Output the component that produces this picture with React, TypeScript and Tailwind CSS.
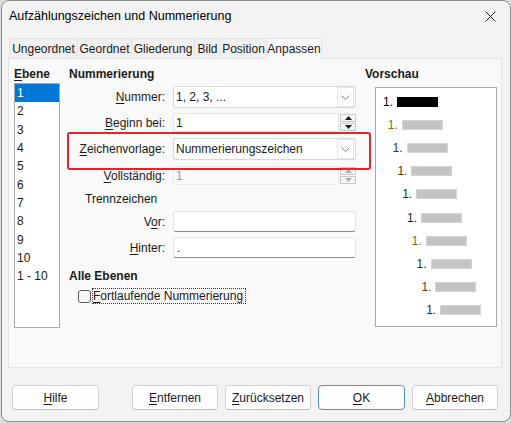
import React from 'react';

const tabs = [
  { label: 'Ungeordnet', w: 'w-[68px]' },
  { label: 'Geordnet', w: 'w-[54px]' },
  { label: 'Gliederung', w: 'w-[63px]' },
  { label: 'Bild', w: 'w-[26px]' },
  { label: 'Position', w: 'w-[46px]' },
];

const levels = ['1', '2', '3', '4', '5', '6', '7', '8', '9', '10', '1 - 10'];

const preview = [
  { pad: 'pl-[7px]', num: 'text-black', bar: 'bg-black border-black' },
  { pad: 'pl-[11.8px]', num: 'text-[#9a6510]', bar: 'bg-[#c3c3c3] border-[#d4d4d4]' },
  { pad: 'pl-[16.6px]', num: 'text-[#28345a]', bar: 'bg-[#c3c3c3] border-[#d4d4d4]' },
  { pad: 'pl-[21.4px]', num: 'text-[#5e3a18]', bar: 'bg-[#c3c3c3] border-[#d4d4d4]' },
  { pad: 'pl-[26.2px]', num: 'text-[#202840]', bar: 'bg-[#c3c3c3] border-[#d4d4d4]' },
  { pad: 'pl-[31px]', num: 'text-[#1a1a1a]', bar: 'bg-[#c3c3c3] border-[#d4d4d4]' },
  { pad: 'pl-[35.8px]', num: 'text-[#9a6510]', bar: 'bg-[#c3c3c3] border-[#d4d4d4]' },
  { pad: 'pl-[40.6px]', num: 'text-[#28345a]', bar: 'bg-[#c3c3c3] border-[#d4d4d4]' },
  { pad: 'pl-[45.4px]', num: 'text-[#5e3a18]', bar: 'bg-[#c3c3c3] border-[#d4d4d4]' },
  { pad: 'pl-[50.2px]', num: 'text-[#202840]', bar: 'bg-[#c3c3c3] border-[#d4d4d4]' },
];

function Chevron() {
  return (
    <svg width="9" height="5" viewBox="0 0 9 5" className="block">
      <polyline points="0.5,0.5 4.5,4.5 8.5,0.5" fill="none" stroke="#8a8a8a" strokeWidth="1" />
    </svg>
  );
}

function Combo({ value }: { value: string }) {
  return (
    <div className="ml-[8px] w-[183px] h-full bg-white border border-[#d8d8d8] rounded-[2px] flex items-center">
      <span className="flex-1 pl-[2px] leading-none">{value}</span>
      <div className="w-[17px] h-[20px] mr-px bg-[#fdfdfd] border border-[#e6e6e6] flex items-center justify-center">
        <Chevron />
      </div>
    </div>
  );
}

function Spin({ value, disabled }: { value: string; disabled?: boolean }) {
  const tri = disabled ? '#a8a8a8' : '#1a1a1a';
  return (
    <div className="ml-[8px] w-[183px] h-full flex">
      <div
        className={
          disabled
            ? 'w-[166px] h-full bg-[#f9f9f9] border border-[#ebebeb] flex items-center pl-[2px] text-[#9a9a9a]'
            : 'w-[166px] h-full bg-white border border-[#e6e6e6] flex items-center pl-[2px]'
        }
      >
        {value}
      </div>
      <div className="w-[17px] h-full flex flex-col justify-center gap-px pl-px">
        <div className="h-[8px] border border-[#c8c8c8] bg-[#f6f6f6] flex items-center justify-center">
          <svg width="7" height="4" viewBox="0 0 7 4">
            <polygon points="0,4 3.5,0 7,4" fill={tri} />
          </svg>
        </div>
        <div className="h-[8px] border border-[#c8c8c8] bg-[#f6f6f6] flex items-center justify-center">
          <svg width="7" height="4" viewBox="0 0 7 4">
            <polygon points="0,0 7,0 3.5,4" fill={tri} />
          </svg>
        </div>
      </div>
    </div>
  );
}

function TextField({ value }: { value: string }) {
  return (
    <div className="ml-[8px] w-[183px] h-full bg-white border border-[#e3e3e3] border-b-[#8a8a8a] rounded-[3px] flex items-center pl-[3px]">
      {value}
    </div>
  );
}

function Label({ first, rest }: { first: string; rest: string }) {
  return (
    <span className="w-[96px] text-right shrink-0">
      <span className="underline underline-offset-2">{first}</span>
      {rest}
    </span>
  );
}

function DialogButton({ first, rest, w, extra }: { first: string; rest: string; w: string; extra?: string }) {
  return (
    <div
      className={`${w} h-[25px] rounded-[4px] bg-[#fdfdfd] border flex items-center justify-center ${
        extra ?? 'border-[#d3d3d3] border-b-[#bdbdbd]'
      }`}
    >
      <span className="underline underline-offset-2">{first}</span>
      {rest}
    </div>
  );
}

export default function App() {
  return (
    <div className="w-[511px] h-[423px] bg-[#dcdcdc] font-['Liberation_Sans',Arial,sans-serif] text-[12px] text-[#1a1a1a]">
      <div className="ml-px w-[510px] h-[422px] rounded-[8px] border border-[#8e8e8e] bg-[#f3f3f3] flex flex-col overflow-hidden">
        {/* title bar */}
        <div className="h-[30px] flex items-center justify-between pl-[7px] pr-[14px] shrink-0">
          <span className="text-[12.5px] text-black">Aufzählungszeichen und Nummerierung</span>
          <svg width="11" height="11" viewBox="0 0 11 11">
            <path d="M0.5 0.5 L10.5 10.5 M10.5 0.5 L0.5 10.5" stroke="#1a1a1a" strokeWidth="1" />
          </svg>
        </div>

        {/* tabs */}
        <div className="mt-[6px] pl-[7px] flex items-end h-[21px] shrink-0">
          {tabs.map((t) => (
            <div
              key={t.label}
              className={`${t.w} h-[20px] border-t border-l border-[#e4e4e4] bg-[#f0f0f0] flex items-center justify-center leading-none`}
            >
              {t.label}
            </div>
          ))}
          <div className="w-[56px] h-[21px] -mb-px border-t border-r border-l border-[#e4e4e4] bg-[#f9f9f9] flex items-center justify-center leading-none relative z-10">
            Anpassen
          </div>
        </div>

        {/* tab page */}
        <div className="ml-[6px] w-[494px] h-[310px] border border-[#e4e4e4] bg-[#f9f9f9] flex relative shrink-0">
          {/* level list */}
          <div className="ml-[5px] w-[46px] flex flex-col">
            <div className="mt-[7px] h-[16px] leading-[16px] font-bold">
              <span className="underline underline-offset-2">E</span>bene
            </div>
            <div className="mt-[1px] h-[245px] border border-[#a9a9a9] bg-white flex flex-col">
              {levels.map((l, i) => (
                <div
                  key={l}
                  className={
                    i === 0
                      ? 'h-[18.3px] bg-[#0078d7] text-white pl-[2px] flex items-center'
                      : 'h-[18.3px] pl-[2px] flex items-center'
                  }
                >
                  {l}
                </div>
              ))}
            </div>
          </div>

          {/* numbering */}
          <div className="ml-[9px] w-[296px] flex flex-col">
            <div className="mt-[7px] h-[16px] leading-[16px] font-bold">Nummerierung</div>
            <div className="mt-[4px] h-[22px] flex items-center">
              <Label first="N" rest="ummer:" />
              <Combo value="1, 2, 3, ..." />
            </div>
            <div className="mt-[5px] h-[19px] flex items-center">
              <Label first="B" rest="eginn bei:" />
              <Spin value="1" />
            </div>
            <div className="mt-[6px] h-[22px] flex items-center">
              <Label first="Z" rest="eichenvorlage:" />
              <Combo value="Nummerierungszeichen" />
            </div>
            <div className="mt-[6px] h-[19px] flex items-center">
              <Label first="V" rest="ollständig:" />
              <Spin value="1" disabled />
            </div>
            <div className="mt-[7px] h-[14px] flex items-center pl-[16px]">Trennzeichen</div>
            <div className="mt-[5px] h-[21px] flex items-center">
              <span className="w-[96px] text-right shrink-0">
                V<span className="underline underline-offset-2">o</span>r:
              </span>
              <TextField value="" />
            </div>
            <div className="mt-[5px] h-[21px] flex items-center">
              <Label first="H" rest="inter:" />
              <TextField value="." />
            </div>
            <div className="mt-[11px] h-[14px] leading-[14px] font-bold">Alle Ebenen</div>
            <div className="mt-[5px] h-[16px] flex items-center pl-[9px]">
              <div className="w-[13px] h-[13px] rounded-[3px] border border-[#5c5c5c] bg-[#f6f6f6] shrink-0" />
              <div className="ml-px h-[16px] border border-dotted border-[#3a3a3a] flex items-center pr-[2px]">
                <span className="underline underline-offset-2">F</span>ortlaufende Nummerierung
              </div>
            </div>
          </div>

          {/* preview */}
          <div className="flex flex-col">
            <div className="mt-[7px] h-[16px] leading-[16px] font-bold">Vorschau</div>
            <div className="ml-[10px] mt-[5px] w-[122px] h-[240px] border border-[#a9a9a9] bg-white pt-[2px] flex flex-col">
              {preview.map((p, i) => (
                <div key={i} className={`${p.pad} h-[23.2px] flex items-center`}>
                  <span className={`${p.num} w-[14px]`}>1.</span>
                  <div className={`${p.bar} w-[41px] h-[10px] border`} />
                </div>
              ))}
            </div>
          </div>

          {/* highlight annotation */}
          <div className="absolute left-[58px] top-[73px] w-[304px] h-[38px] border-2 border-[#e3242b] rounded-[3px] pointer-events-none" />
        </div>

        {/* buttons */}
        <div className="mt-[17px] pl-[10px] flex items-center shrink-0">
          <DialogButton first="H" rest="ilfe" w="w-[87px]" />
          <div className="ml-[33px] flex gap-[7px]">
            <DialogButton first="E" rest="ntfernen" w="w-[86px]" />
            <DialogButton first="Z" rest="urücksetzen" w="w-[86px]" />
            <DialogButton first="O" rest="K" w="w-[87px]" extra="border-[#4f8fd6]" />
            <DialogButton first="A" rest="bbrechen" w="w-[86px]" />
          </div>
        </div>
      </div>
    </div>
  );
}
